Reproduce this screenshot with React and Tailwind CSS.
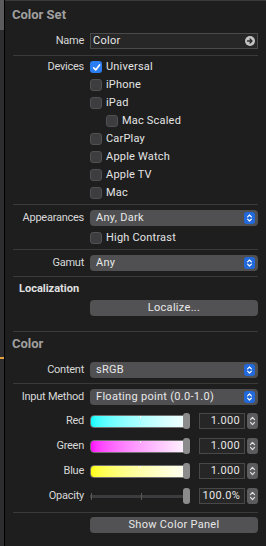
import React from "react";

const Sep = ({ className = "" }) => (
  <div className={`mx-[8px] h-px bg-[#3a3a3b] ${className}`} />
);

function Check({ on }) {
  return on ? (
    <span className="flex h-[12px] w-[12px] shrink-0 items-center justify-center rounded-[3px] bg-[#2b7df2]">
      <svg width="9" height="9" viewBox="0 0 10 10">
        <path
          d="M1.8 5.3 L4.1 7.7 L8.4 2.2"
          fill="none"
          stroke="white"
          strokeWidth="1.8"
          strokeLinecap="round"
          strokeLinejoin="round"
        />
      </svg>
    </span>
  ) : (
    <span className="h-[12px] w-[12px] shrink-0 rounded-[3px] border border-[#505052] bg-[#3d3d3f]" />
  );
}

function PopIcon() {
  return (
    <span className="flex h-[12px] w-[11px] items-center justify-center rounded-[3px] bg-[#2269dc]">
      <svg width="7" height="10" viewBox="0 0 7 10">
        <path
          d="M1.6 3.9 L3.5 2 L5.4 3.9 M1.6 6.1 L3.5 8 L5.4 6.1"
          fill="none"
          stroke="white"
          strokeWidth="1.2"
          strokeLinecap="round"
          strokeLinejoin="round"
        />
      </svg>
    </span>
  );
}

function Popup({ value, className = "" }) {
  return (
    <div
      className={`flex h-[16px] items-center justify-between rounded-[4px] bg-[#505052] pr-[3px] pl-[6px] tracking-[0.3px] text-[#e8e8e8] ${className}`}
    >
      <span>{value}</span>
      <PopIcon />
    </div>
  );
}

function Row({ label, className = "", children }) {
  return (
    <div
      className={`grid grid-cols-[79px_1fr] items-center gap-x-[6px] pr-[8px] ${className}`}
    >
      <div className="text-right tracking-[-0.25px] text-[#d8d8d8]">{label}</div>
      <div>{children}</div>
    </div>
  );
}

function CheckRow({ label, on, indent, className = "" }) {
  return (
    <Row label="" className={`h-[18px] ${className}`}>
      <div className={`flex items-center gap-[4px] ${indent ? "pl-[16px]" : ""}`}>
        <Check on={on} />
        <span className="tracking-[0.2px] text-[#e4e4e4]">{label}</span>
      </div>
    </Row>
  );
}

function Stepper() {
  return (
    <span className="flex h-[16px] w-[11px] items-center justify-center rounded-[3px] bg-[#5c5c5e]">
      <svg width="7" height="12" viewBox="0 0 7 12">
        <path
          d="M1.5 4.6 L3.5 2.4 L5.5 4.6 M1.5 7.4 L3.5 9.6 L5.5 7.4"
          fill="none"
          stroke="#e0e0e0"
          strokeWidth="1.2"
          strokeLinecap="round"
          strokeLinejoin="round"
        />
      </svg>
    </span>
  );
}

function ValueField({ value }) {
  return (
    <div className="ml-[9px] flex h-[16px] w-[46px] items-center justify-end border border-[#484848] bg-[#262626] pr-[4px] tracking-[0.3px] text-[#e6e6e6]">
      {value}
    </div>
  );
}

function ColorSlider({ gradient }) {
  return (
    <div className="relative flex h-[16px] w-[100px] items-center">
      <div
        className={`relative h-[13px] w-[97px] rounded-[4px] border border-[#707070] bg-linear-to-r ${gradient}`}
      >
        <span className="absolute top-0 left-[49px] h-[2px] w-px bg-white" />
      </div>
      <span className="absolute top-0 right-0 h-[16px] w-[7px] rounded-[3px] bg-[#8c8c8c]" />
    </div>
  );
}

function OpacitySlider() {
  return (
    <div className="relative flex h-[16px] w-[100px] items-center">
      <div className="relative h-[3px] w-[97px] bg-[#3c3c3e]">
        <span className="absolute top-[-2px] left-[1px] h-[7px] w-px bg-[#5a5a5a]" />
        <span className="absolute top-[-2px] left-[51px] h-[7px] w-px bg-[#5a5a5a]" />
      </div>
      <span className="absolute top-0 right-0 h-[16px] w-[7px] rounded-[3px] bg-[#8c8c8c]" />
    </div>
  );
}

function SliderRow({ label, slider, value, className = "" }) {
  return (
    <Row label={label} className={`h-[16px] ${className}`}>
      <div className="flex items-center">
        {slider}
        <ValueField value={value} />
        <span className="ml-[2px]">
          <Stepper />
        </span>
      </div>
    </Row>
  );
}

function Button({ children, className = "" }) {
  return (
    <div
      className={`flex h-[16px] items-center justify-center rounded-[4px] bg-[#525254] tracking-[0.3px] text-[#e8e8e8] ${className}`}
    >
      {children}
    </div>
  );
}

export default function App() {
  return (
    <div className="flex h-[546px] w-[266px] overflow-hidden bg-[#1e1e1e] font-['Roboto','Liberation_Sans',sans-serif] text-[11px] leading-[14px]">
      {/* scroll strip on the left */}
      <div className="flex w-[5px] flex-col">
        <div className="h-[30px] bg-[#5b5b5d]" />
        <div className="h-[327px] bg-[#2d2d2f]" />
        <div className="h-[2px] bg-[#e8a33a]" />
        <div className="flex-1 bg-[#2d2d2f]" />
      </div>
      <div className="w-px bg-black" />

      <div className="flex flex-1 flex-col border-t border-[#3a3a3c]">
        <div className="flex h-[27px] items-center pl-[7px] text-[13px] font-bold text-[#a0a0a0]">
          Color Set
        </div>

        <Row label="Name" className="mt-[5px] h-[16px]">
          <div className="flex h-[16px] items-center justify-between border border-[#4a4a4a] bg-[#272727] pr-[2px] pl-[2px] tracking-[0.3px] text-[#e8e8e8]">
            <span>Color</span>
            <span className="flex h-[10px] w-[10px] items-center justify-center rounded-full bg-[#c4c4c4]">
              <svg width="8" height="8" viewBox="0 0 8 8">
                <path
                  d="M1.5 4 H6 M4 2 L6 4 L4 6"
                  fill="none"
                  stroke="#2a2a2a"
                  strokeWidth="1.3"
                  strokeLinecap="round"
                  strokeLinejoin="round"
                />
              </svg>
            </span>
          </div>
        </Row>

        <Sep className="mt-[6px]" />

        <div className="mt-[2px] flex flex-col">
          <Row label="Devices" className="h-[18px]">
            <div className="flex items-center gap-[4px]">
              <Check on />
              <span className="tracking-[0.2px] text-[#e4e4e4]">Universal</span>
            </div>
          </Row>
          <CheckRow label="iPhone" />
          <CheckRow label="iPad" />
          <CheckRow label="Mac Scaled" indent />
          <CheckRow label="CarPlay" />
          <CheckRow label="Apple Watch" />
          <CheckRow label="Apple TV" />
          <CheckRow label="Mac" />
        </div>

        <Sep className="mt-[2px]" />

        <Row label="Appearances" className="mt-[5px] h-[16px]">
          <Popup value="Any, Dark" />
        </Row>
        <CheckRow label="High Contrast" className="mt-[3px]" />

        <Sep className="mt-[2px]" />

        <Row label="Gamut" className="mt-[5px] h-[16px]">
          <Popup value="Any" />
        </Row>

        <Sep className="mt-[5px]" />

        <div className="mt-[4px] flex h-[16px] items-center pl-[14px] font-bold text-[#e0e0e0]">
          Localization
        </div>
        <Row label="" className="mt-[3px] h-[16px]">
          <Button>Localize...</Button>
        </Row>

        <Sep className="mt-[15px]" />

        <div className="flex h-[24px] items-center pl-[7px] text-[13px] font-bold text-[#a0a0a0]">
          Color
        </div>

        <Row label="Content" className="mt-[6px] h-[16px]">
          <Popup value="sRGB" />
        </Row>

        <Sep className="mt-[5px]" />

        <Row label="Input Method" className="mt-[5px] h-[16px]">
          <Popup value="Floating point (0.0-1.0)" />
        </Row>

        <SliderRow
          label="Red"
          className="mt-[8px]"
          value="1.000"
          slider={<ColorSlider gradient="from-[#00ffff] to-[#f4ffff]" />}
        />
        <SliderRow
          label="Green"
          className="mt-[9px]"
          value="1.000"
          slider={<ColorSlider gradient="from-[#ff00ff] to-[#fff4ff]" />}
        />
        <SliderRow
          label="Blue"
          className="mt-[9px]"
          value="1.000"
          slider={<ColorSlider gradient="from-[#ffff00] to-[#fffff4]" />}
        />
        <SliderRow
          label="Opacity"
          className="mt-[9px]"
          value="100.0%"
          slider={<OpacitySlider />}
        />

        <Sep className="mt-[8px]" />

        <Row label="" className="mt-[4px] h-[16px]">
          <Button>Show Color Panel</Button>
        </Row>
      </div>
    </div>
  );
}
